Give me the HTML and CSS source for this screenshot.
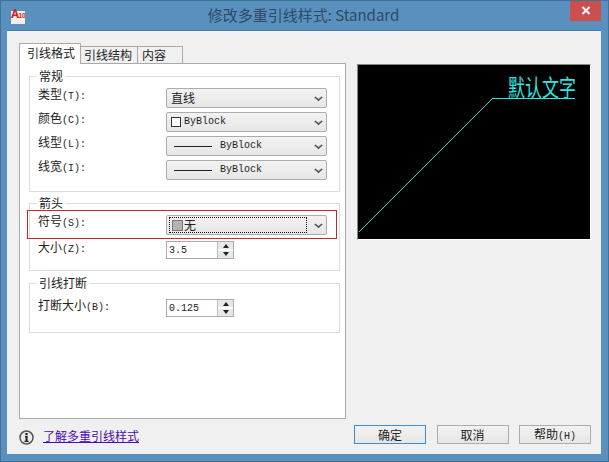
FILE: index.html
```html
<!DOCTYPE html>
<html lang="zh">
<head>
<meta charset="utf-8">
<title>修改多重引线样式</title>
<link rel="stylesheet" href="styles.css">
</head>
<body>
<div class="window">
  <header class="titlebar">
    <svg class="appicon" width="16" height="16" viewBox="0 0 16 16"><path d="M1 3h14v13H1z" fill="#f2eeea"/><path d="M1 10 4 1h2l3 9H7l-.6-2H3.600L3 10zM4.100 6.400h1.800L5 3.200z" fill="#d2232a"/><text x="8.500" y="10" class="appicon-num">10</text></svg>
    <h1 class="title">修改多重引线样式: Standard</h1>
    <button class="close" aria-label="关闭"><svg width="10" height="9" viewBox="0 0 10 9"><path d="M1.500 1 8.500 8M8.500 1 1.500 8" stroke="#fff" stroke-width="2"/></svg></button>
  </header>
  <main class="client">
    <div class="top">
      <section class="tabs">
        <nav class="tabstrip">
          <span class="tab active">引线格式</span>
          <span class="tab t2">引线结构</span>
          <span class="tab t3">内容</span>
        </nav>
        <div class="panel">
          <fieldset class="group g1">
            <legend>常规</legend>
            <div class="row"><label>类型<i>(T):</i></label><div class="combo"><span class="val big">直线</span><b class="chev"></b></div></div>
            <div class="row"><label>颜色<i>(C):</i></label><div class="combo"><span class="swatch white"></span><span class="val mono">ByBlock</span><b class="chev"></b></div></div>
            <div class="row"><label>线型<i>(L):</i></label><div class="combo"><span class="ln"></span><span class="val mono">ByBlock</span><b class="chev"></b></div></div>
            <div class="row"><label>线宽<i>(I):</i></label><div class="combo"><span class="ln"></span><span class="val mono">ByBlock</span><b class="chev"></b></div></div>
          </fieldset>
          <fieldset class="group g2">
            <legend>箭头</legend>
            <div class="row"><label>符号<i>(S):</i></label><div class="combo"><div class="focus"><span class="swatch grey"></span><span class="val big">无</span></div><b class="chev"></b></div></div>
            <div class="row"><label>大小<i>(Z):</i></label><div class="spin"><span class="num">3.5</span><div class="arrows"><b class="up"></b><b class="down"></b></div></div></div>
          </fieldset>
          <fieldset class="group g3">
            <legend>引线打断</legend>
            <div class="row"><label>打断大小<i>(B):</i></label><div class="spin"><span class="num">0.125</span><div class="arrows"><b class="up"></b><b class="down"></b></div></div></div>
          </fieldset>
        </div>
      </section>
      <figure class="preview">
        <svg width="232" height="174" viewBox="0 0 232 174">
          <path d="M1 167 134.500 33.500" stroke="#3fd8c8" fill="none"/>
          <path d="M134 33.500H217" stroke="#2fe6e0" fill="none"/>
          <text transform="translate(150 31) scale(1 1.350)" class="mtext">默认文字</text>
        </svg>
      </figure>
    </div>
    <footer class="foot">
      <svg class="info" width="15" height="15" viewBox="0 0 15 15"><circle cx="7.500" cy="7.500" r="6.500" fill="#ececec" stroke="#555" stroke-width="1.500"/><path d="M6 6h2.600v4.800h1v1.200H5.500v-1.200h1V7.200H6z" fill="#222"/><rect x="6.400" y="3" width="2.200" height="2.200" fill="#222"/></svg>
      <a class="link" href="#">了解多重引线样式</a>
      <div class="btns">
        <button class="btn default">确定</button>
        <button class="btn">取消</button>
        <button class="btn">帮助<i>(H)</i></button>
      </div>
    </footer>
  </main>
  <div class="redbox"></div>
</div>
</body>
</html>
```
FILE: styles.css
```css
* { box-sizing: border-box; }
html, body { margin: 0; padding: 0; }
body { font: 12px/1 "Noto Sans CJK SC", sans-serif; color: #222; background: #5a90bd; }
i { font-style: normal; font-family: "Liberation Mono", monospace; font-size: 10px; }
.window { position: relative; width: 609px; height: 462px; background: #5a90bd; border: 1px solid #3f7296; display: flex; flex-direction: column; overflow: hidden; }
.titlebar { height: 29px; display: flex; align-items: center; position: relative; flex: none; }
.appicon { position: absolute; left: 9px; top: 7px; }
.appicon-num { font: bold 6.500px "Liberation Sans", sans-serif; fill: #d2232a; }
.title { flex: 1; margin: -2px 0 0; text-align: center; font-weight: 400; font-size: 15px; line-height: 29px; height: 29px; color: #2e4a66; padding-right: 2px; }
.close { position: absolute; right: 7px; top: -1px; width: 31px; height: 21px; background: #c9504c; border: 0; padding: 0; display: flex; align-items: center; justify-content: center; }
.client { flex: 1; margin: 0 7px 7px 6px; background: #f0f0f0; border-top: 1px solid #4a7ea6; display: flex; flex-direction: column; padding: 12px 10px 0 12px; }
.top { display: flex; gap: 11px; align-items: flex-start; }
.tabs { width: 327px; flex: none; }
.tabstrip { display: flex; height: 20px; align-items: flex-end; }
.tab { height: 17px; border: 1px solid #aaa; border-bottom: 0; background: #f0f0f0; font-size: 12px; line-height: 15px; padding: 0 3px; margin-right: -1px; white-space: nowrap; flex: none; }
.tab.active { height: 21px; margin-bottom: -1px; background: #fff; line-height: 18px; width: 62px; padding: 0 7px; position: relative; z-index: 1; }
.tab.t2 { width: 58px; }
.tab.t3 { width: 46px; padding-left: 4px; }
.panel { height: 356px; background: #fff; border: 1px solid #aaa; padding: 6px 5px 0 9px; }
.group { margin: 0 0 5px; padding: 0; border: 1px solid #dcdcdc; min-width: 0; position: relative; }
.group legend { margin-left: 6px; padding: 0 3px; font-size: 12px; line-height: 12px; height: 12px; color: #222; }
.g1 { height: 122px; padding-top: 6px; }
.g2 { height: 74px; padding-top: 6px; margin-bottom: 6px; }
.g3 { height: 56px; padding-top: 10px; }
.row { display: flex; align-items: flex-start; height: 24px; padding-left: 8px; }
.g2 .row { height: 26px; }
label { width: 128px; font-size: 12px; line-height: 14px; flex: none; margin-top: -1px; }
.combo { width: 161px; height: 20px; display: flex; align-items: center; padding-left: 4px; background: linear-gradient(#f2f2f2, #e6e6e6); border: 1px solid #acacac; border-radius: 2px; position: relative; }
.val { line-height: 18px; }
.big { font-size: 12px; }
.mono { font-family: "Liberation Mono", monospace; font-size: 10px; }
.swatch { width: 10px; height: 10px; margin: 0 3px 0 0; border: 1px solid #333; flex: none; }
.swatch.white { background: #fff; }
.swatch.grey { background: #b4b4b4; border-color: #777; margin: 0 1px 0 0; width: 11px; height: 11px; }
.ln { width: 38px; height: 1px; background: #222; margin: 0 8px 0 3px; flex: none; }
.chev { position: absolute; right: 4px; top: 5px; width: 7px; height: 7px; border: solid #555; border-width: 0 2px 2px 0; transform: scale(.85, .7) rotate(45deg); }
.focus { display: flex; align-items: center; width: 138px; height: 16px; outline: 1px dotted #111; outline-offset: -1px; padding-left: 3px; margin-left: -2px; }
.spin { width: 68px; height: 18px; background: #fff; border: 1px solid #acacac; display: flex; align-items: center; justify-content: space-between; padding-left: 2px; }
.num { font: 10px "Liberation Mono", monospace; }
.arrows { width: 16px; height: 16px; background: linear-gradient(#e8e8e8 0 46%, #fff 46% 54%, #e8e8e8 54%); border-left: 1px solid #bbb; display: flex; flex-direction: column; align-items: center; justify-content: space-around; }
.up { border: solid transparent; border-width: 0 3px 4px; border-bottom-color: #222; }
.down { border: solid transparent; border-width: 4px 3px 0; border-top-color: #222; }
.preview { margin: 21px 0 0; width: 234px; height: 176px; background: #000; border: 1px solid #fff; border-top-color: #888; border-left-color: #888; flex: none; }
.preview svg { display: block; }
.mtext { font: 17px "Noto Sans CJK SC", sans-serif; fill: #2fe6e0; }
.foot { display: flex; align-items: flex-start; margin-top: 6px; height: 19px; }
.info { flex: none; margin-top: 5px; }
.link { margin: 5px 0 0 9px; font-size: 12px; color: #4b0bb3; }
.btns { margin-left: auto; display: flex; gap: 10.500px; }
.btn { width: 72px; height: 19px; padding: 0; border: 1px solid #adadad; background: linear-gradient(#f2f2f2, #e6e6e6); font: 12px/1 "Noto Sans CJK SC", sans-serif; color: #222; }
.btn.default { border-color: #3a90d8; }
.redbox { position: absolute; left: 26px; top: 209px; width: 310px; height: 29px; border: 1px solid #c9252c; pointer-events: none; }
```
